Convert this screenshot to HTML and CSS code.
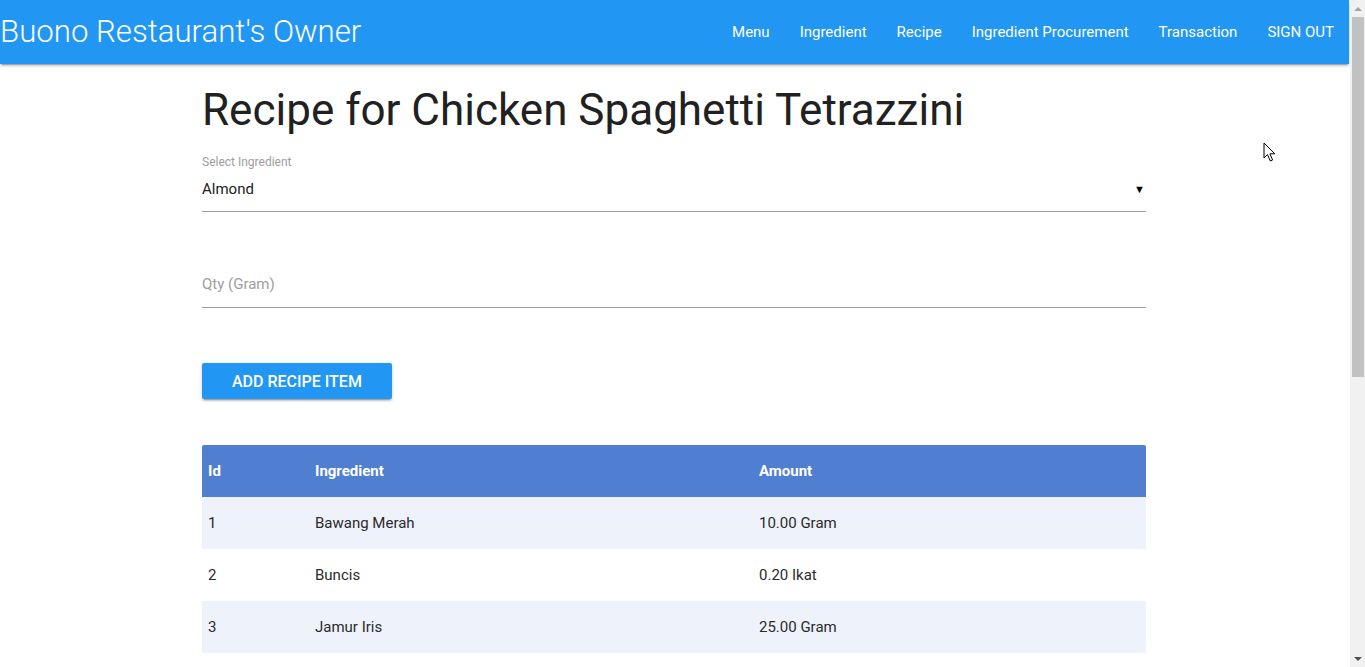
FILE: index.html
```html
<!DOCTYPE html>
<html lang="en">
<head>
<meta charset="utf-8">
<title>Recipe</title>
<link rel="stylesheet" href="styles.css">
</head>
<body>
<div class="page">
  <nav class="navbar">
    <a class="brand" href="#">Buono Restaurant's Owner</a>
    <ul class="nav-links">
      <li><a href="#">Menu</a></li>
      <li><a href="#">Ingredient</a></li>
      <li><a href="#">Recipe</a></li>
      <li><a href="#">Ingredient Procurement</a></li>
      <li><a href="#">Transaction</a></li>
      <li><a href="#">SIGN OUT</a></li>
    </ul>
  </nav>
  <main class="container">
    <h3 class="title">Recipe for Chicken Spaghetti Tetrazzini</h3>
    <div class="field select-field">
      <label class="field-label">Select Ingredient</label>
      <div class="select-box">
        <span class="select-value">Almond</span>
        <span class="caret">▼</span>
      </div>
    </div>
    <div class="field qty-field">
      <div class="input-box"><span class="placeholder">Qty (Gram)</span></div>
    </div>
    <div class="actions">
      <button class="btn">ADD RECIPE ITEM</button>
    </div>
    <table class="recipe-table">
      <colgroup>
        <col class="col-id">
        <col class="col-ing">
        <col class="col-amt">
      </colgroup>
      <thead>
        <tr><th>Id</th><th>Ingredient</th><th>Amount</th></tr>
      </thead>
      <tbody>
        <tr><td>1</td><td>Bawang Merah</td><td>10.00 Gram</td></tr>
        <tr><td>2</td><td>Buncis</td><td>0.20 Ikat</td></tr>
        <tr><td>3</td><td>Jamur Iris</td><td>25.00 Gram</td></tr>
      </tbody>
    </table>
  </main>
  <svg class="cursor" width="14" height="22" viewBox="0 0 14 22" aria-hidden="true">
    <path d="M1 1 L1 16 L4.5 12.6 L7.3 19 L9.6 18 L6.9 11.8 L11.8 11.8 Z" fill="#fff" stroke="#000" stroke-width="1" stroke-linejoin="miter"/>
  </svg>
</div>
<aside class="scrollbar" aria-hidden="true">
  <div class="sb-arrow sb-up"></div>
  <div class="sb-track"><div class="sb-thumb"></div></div>
  <div class="sb-arrow sb-down"></div>
</aside>
</body>
</html>
```

FILE: styles.css
```css
* { box-sizing: border-box; }

html, body {
  margin: 0;
  padding: 0;
  height: 100%;
  overflow: hidden;
}

body {
  display: flex;
  font-family: Roboto, "Noto Sans", sans-serif;
  color: rgba(0, 0, 0, 0.87);
  background: #fff;
}

.page {
  flex: 1;
  position: relative;
  height: 100vh;
  overflow: hidden;
}

/* Navbar */
.navbar {
  height: 64px;
  background: #2196f3;
  display: flex;
  align-items: center;
  justify-content: space-between;
  box-shadow: 0 2px 2px 0 rgba(0,0,0,0.14), 0 1px 5px 0 rgba(0,0,0,0.12), 0 3px 1px -2px rgba(0,0,0,0.2);
  margin-right: 1px;
}

.brand {
  color: #fff;
  text-decoration: none;
  font-size: 31.2px;
  font-weight: 300;
  line-height: 64px;
}

.nav-links {
  list-style: none;
  margin: 0;
  padding: 0;
  display: flex;
  height: 64px;
}

.nav-links a {
  display: block;
  padding: 0 15px;
  line-height: 64px;
  color: #fff;
  text-decoration: none;
  font-size: 15px;
  font-weight: 400;
}

/* Content */
.container {
  width: 944px;
  margin: 0 0 0 202px;
  display: flex;
  flex-direction: column;
}

.title {
  font-size: 44px;
  font-weight: 400;
  line-height: 110%;
  margin: 22px 0 0;
  color: #212121;
}

.field {
  display: flex;
  flex-direction: column;
}

.select-field {
  margin-top: 20px;
}

.field-label {
  font-size: 12px;
  color: #9e9e9e;
  line-height: 16px;
}

.select-box {
  height: 42px;
  border-bottom: 1px solid #9e9e9e;
  display: flex;
  align-items: center;
  justify-content: space-between;
  padding-bottom: 3px;
}

.select-value {
  font-size: 15px;
  color: #212121;
}

.caret {
  font-size: 11px;
  color: #000;
  margin-right: 1px;
}

.qty-field {
  margin-top: 48px;
}

.input-box {
  height: 48px;
  border-bottom: 1px solid #9e9e9e;
  display: flex;
  align-items: center;
  padding-top: 1px;
}

.placeholder {
  font-size: 15px;
  color: #9e9e9e;
}

.actions {
  margin-top: 55px;
}

.btn {
  height: 36px;
  padding: 0 30px;
  border: none;
  border-radius: 2px;
  background: #2196f3;
  color: #fff;
  font-family: Roboto, sans-serif;
  font-size: 16px;
  font-weight: 500;
  letter-spacing: 0;
  box-shadow: 0 2px 2px 0 rgba(0,0,0,0.14), 0 1px 5px 0 rgba(0,0,0,0.12), 0 3px 1px -2px rgba(0,0,0,0.2);
}

/* Table */
.recipe-table {
  margin-top: 46px;
  width: 100%;
  border-collapse: separate;
  border-spacing: 0;
  font-size: 15px;
}

.col-id { width: 107px; }
.col-ing { width: 444px; }

.recipe-table th,
.recipe-table td {
  height: 52px;
  padding: 0 6px;
  text-align: left;
  vertical-align: middle;
}

.recipe-table th {
  background: #507ed1;
  color: #fff;
  font-weight: 700;
  font-size: 15px;
}

.recipe-table th:first-child { border-top-left-radius: 2px; }
.recipe-table th:last-child { border-top-right-radius: 2px; }

.recipe-table td { color: #2b2b2b; }

.recipe-table tbody tr:nth-child(odd) td { background: #eef2fa; }

/* Cursor overlay */
.cursor {
  position: absolute;
  left: 1263px;
  top: 142px;
}

/* Fake scrollbar */
.scrollbar {
  width: 15px;
  height: 100vh;
  background: #f1f1f1;
  display: flex;
  flex-direction: column;
  flex-shrink: 0;
}

.sb-arrow {
  height: 17px;
  display: flex;
  align-items: center;
  justify-content: center;
}

.sb-up::before {
  content: "";
  border-left: 4px solid transparent;
  border-right: 4px solid transparent;
  border-bottom: 4px solid #a3a3a3;
}

.sb-down::before {
  content: "";
  border-left: 4px solid transparent;
  border-right: 4px solid transparent;
  border-top: 4px solid #505050;
}

.sb-track {
  flex: 1;
  padding: 0 1px 0 2px;
}

.sb-thumb {
  height: 360px;
  background: #c1c1c1;
}
```
